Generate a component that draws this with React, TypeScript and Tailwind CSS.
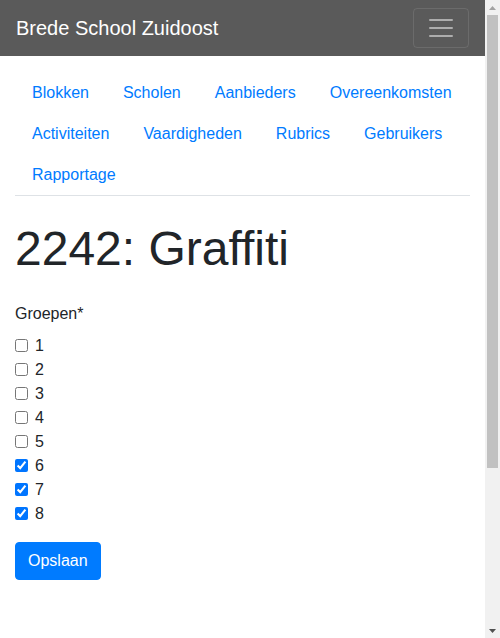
import { useState } from 'react';

const navLinks = [
  'Blokken',
  'Scholen',
  'Aanbieders',
  'Overeenkomsten',
  'Activiteiten',
  'Vaardigheden',
  'Rubrics',
  'Gebruikers',
  'Rapportage',
];

const groepen = ['1', '2', '3', '4', '5', '6', '7', '8'];

// browser-scrollbar zoals in de screenshot (headless toont er geen)
function FakeScrollbar() {
  return (
    <div className="flex w-[15px] shrink-0 flex-col bg-[#f1f1f1]">
      <div className="flex h-[15px] items-center justify-center">
        <svg width="7" height="4" viewBox="0 0 7 4">
          <path d="M3.5 0L7 4H0z" fill="#a3a3a3" />
        </svg>
      </div>
      <div className="mx-[2px] h-[453px] bg-[#c1c1c1]" />
      <div className="flex-1" />
      <div className="flex h-[15px] items-center justify-center">
        <svg width="7" height="4" viewBox="0 0 7 4">
          <path d="M0 0h7L3.5 4z" fill="#505050" />
        </svg>
      </div>
    </div>
  );
}

export default function App() {
  const [checked, setChecked] = useState<string[]>(['6', '7', '8']);

  function toggle(groep: string) {
    setChecked((prev) =>
      prev.includes(groep) ? prev.filter((g) => g !== groep) : [...prev, groep],
    );
  }

  return (
    <div className="flex h-screen bg-white font-['Liberation_Sans',Arial,sans-serif] text-[#212529]">
      <div className="min-w-0 flex-1 overflow-hidden">
        <nav className="flex h-14 items-center justify-between bg-[#5a5a5a] px-4">
          <a href="#" className="text-[20px] leading-[30px] text-white">
            Brede School Zuidoost
          </a>
          <button
            type="button"
            className="flex h-10 w-14 items-center justify-center rounded border border-white/10"
            aria-label="Menu"
          >
            <svg width="30" height="30" viewBox="0 0 30 30">
              <path
                d="M4 7h22M4 15h22M4 23h22"
                stroke="rgba(255,255,255,0.5)"
                strokeWidth="2"
                strokeLinecap="round"
              />
            </svg>
          </button>
        </nav>

        <div className="px-[15px] pt-4">
          {/* tabs zonder actieve tab, alleen de onderrand */}
          <ul className="flex flex-wrap border-b border-[#dee2e6]">
            {navLinks.map((link) => (
              <li key={link} className="-mb-px">
                <a
                  href="#"
                  className="block border border-transparent px-4 py-2 text-base leading-6 text-[#007bff]"
                >
                  {link}
                </a>
              </li>
            ))}
          </ul>

          <h1 className="mt-6 text-[48px] leading-[57.6px] font-normal">2242: Graffiti</h1>

          <form className="mt-6" onSubmit={(e) => e.preventDefault()}>
            <label className="mb-2 block text-base leading-6">Groepen*</label>
            {groepen.map((groep) => (
              <label key={groep} className="flex h-6 items-start gap-[7px] text-base leading-6">
                <input
                  type="checkbox"
                  checked={checked.includes(groep)}
                  onChange={() => toggle(groep)}
                  className="m-0 mt-[5px] h-[13px] w-[13px]"
                />
                <span>{groep}</span>
              </label>
            ))}

            <button
              type="submit"
              className="mt-4 rounded border border-[#007bff] bg-[#007bff] px-3 py-1.5 text-base leading-6 text-white"
            >
              Opslaan
            </button>
          </form>
        </div>
      </div>
      <FakeScrollbar />
    </div>
  );
}
